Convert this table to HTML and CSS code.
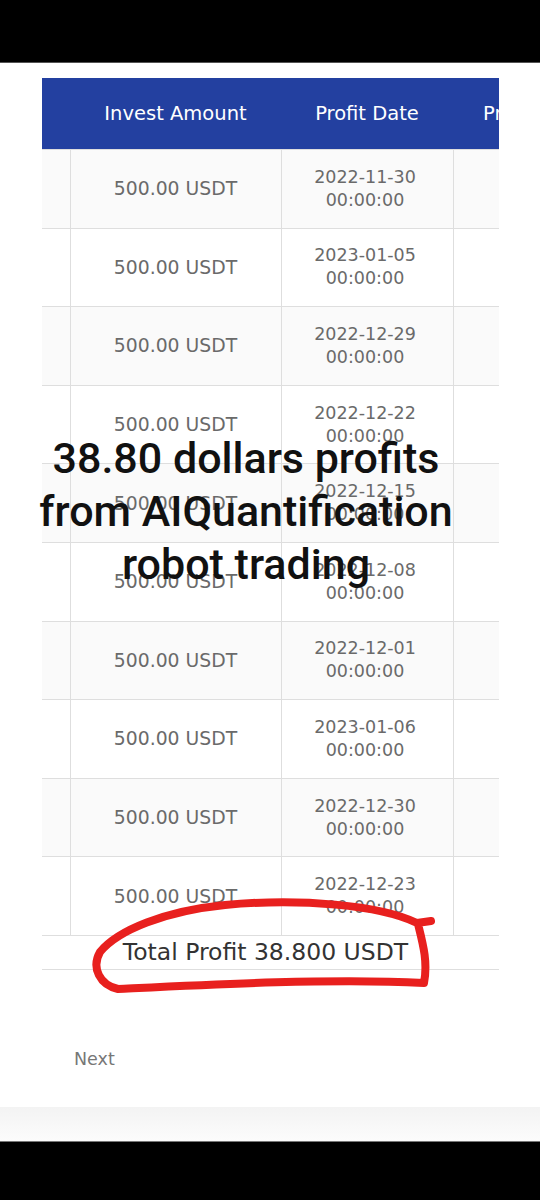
FILE: index.html
```html
<!DOCTYPE html>
<html lang="en">
<head>
    <meta charset="UTF-8">
    <meta name="viewport" content="width=device-width, initial-scale=1.0">
    <title>Profit Records</title>
    <link rel="stylesheet" href="styles.css">
</head>
<body>

    <div class="status-bar"></div>

    <div class="page">
        <div class="card">
            <div class="table-wrap">
                <table class="records">
                    <thead>
                        <tr>
                            <th class="col-first"></th>
                            <th class="col-amount">Invest Amount</th>
                            <th class="col-date">Profit Date</th>
                            <th class="col-profit">Profit Amount</th>
                        </tr>
                    </thead>
                    <tbody>
                        <tr><td></td><td>500.00 USDT</td><td class="date">2022-11-30<br>00:00:00</td><td></td></tr>
                        <tr><td></td><td>500.00 USDT</td><td class="date">2023-01-05<br>00:00:00</td><td></td></tr>
                        <tr><td></td><td>500.00 USDT</td><td class="date">2022-12-29<br>00:00:00</td><td></td></tr>
                        <tr><td></td><td>500.00 USDT</td><td class="date">2022-12-22<br>00:00:00</td><td></td></tr>
                        <tr><td></td><td>500.00 USDT</td><td class="date">2022-12-15<br>00:00:00</td><td></td></tr>
                        <tr><td></td><td>500.00 USDT</td><td class="date">2022-12-08<br>00:00:00</td><td></td></tr>
                        <tr><td></td><td>500.00 USDT</td><td class="date">2022-12-01<br>00:00:00</td><td></td></tr>
                        <tr><td></td><td>500.00 USDT</td><td class="date">2023-01-06<br>00:00:00</td><td></td></tr>
                        <tr><td></td><td>500.00 USDT</td><td class="date">2022-12-30<br>00:00:00</td><td></td></tr>
                        <tr><td></td><td>500.00 USDT</td><td class="date">2022-12-23<br>00:00:00</td><td></td></tr>
                    </tbody>
                </table>
                <div class="total">Total Profit 38.800 USDT</div>
            </div>

            <div class="pager">
                <a class="next">Next</a>
            </div>

            <!-- caption pasted on top of the screenshot -->
            <div class="caption">38.80 dollars profits<br>from AIQuantification<br>robot trading</div>

            <!-- hand drawn red circle round the total -->
            <svg class="scribble" width="540" height="1200" viewBox="0 0 540 1200">
                <path d="M431 921 L417 923 C380 905 300 898 225 905 C165 911 118 930 100 952 C91 968 100 985 118 989 C200 985 330 978 424 983 C428 962 423 944 418 924"
                      fill="none" stroke="#e8201e" stroke-width="8" stroke-linecap="round" stroke-linejoin="round"/>
            </svg>
        </div>
        <div class="card-foot"></div>
    </div>

    <div class="nav-bar"></div>

</body>
</html>
```

FILE: styles.css
```css
body {
    margin: 0;
    font-family: "DejaVu Sans", sans-serif;
    background-color: #fff;
    width: 540px;
    height: 1200px;
    overflow: hidden;
}

.status-bar {
    height: 62px;
    background-color: #000;
    border-bottom: 1px solid #555;
}

.page {
    height: 1078px;
    display: flex;
    flex-direction: column;
}

.card {
    height: 1044px;
    padding-top: 15px;
    box-sizing: border-box;
    box-shadow: 0 2px 4px rgba(0, 0, 0, 0.06);
    background: #fff;
}

.card-foot {
    flex: 1;
    background: linear-gradient(#f3f3f3, #fcfcfc);
}

.table-wrap {
    margin-left: 42px;
    width: 457px;
    overflow: hidden;
}

.records {
    border-collapse: collapse;
    table-layout: fixed;
    width: 600px;
}

.records th {
    background-color: #2340a0;
    color: #fff;
    font-weight: normal;
    font-size: 19.5px;
    height: 71px;
    padding: 0;
    text-align: center;
}

.records th.col-first { width: 28px; }
.records th.col-amount { width: 211px; }
.records th.col-date { width: 172px; }
.records th.col-profit { width: 189px; text-align: left; padding-left: 30px; }

.records td {
    height: 77.6px;
    padding: 0;
    text-align: center;
    color: #6a6a6a;
    font-size: 18.8px;
    line-height: 23px;
    border-left: 1px solid #dedede;
    border-bottom: 1px solid #dedede;
}

.records td.date {
    font-size: 17.5px;
    padding-right: 4px;
}

.records td:first-child {
    border-left: none;
}

.records tbody tr:nth-child(odd) td {
    background-color: #fafafa;
}

.records tbody tr:first-child td {
    border-top: 1px solid #dedede;
}

.total {
    height: 33px;
    line-height: 33px;
    border-bottom: 1px solid #dedede;
    text-align: center;
    padding-right: 10px;
    color: #333;
    font-size: 23.5px;
}

.pager {
    padding: 79px 0 0 74px;
}

.next {
    color: #777;
    font-size: 17.5px;
}

.caption {
    position: absolute;
    left: 0;
    width: 492px;
    top: 432px;
    text-align: center;
    font-family: Roboto, sans-serif;
    font-weight: 500;
    font-size: 43px;
    line-height: 53px;
    color: #111;
}

.scribble {
    position: absolute;
    left: 0;
    top: 0;
    pointer-events: none;
}

.nav-bar {
    height: 59px;
    background-color: #000;
    border-top: 1px solid #777;
}
```
